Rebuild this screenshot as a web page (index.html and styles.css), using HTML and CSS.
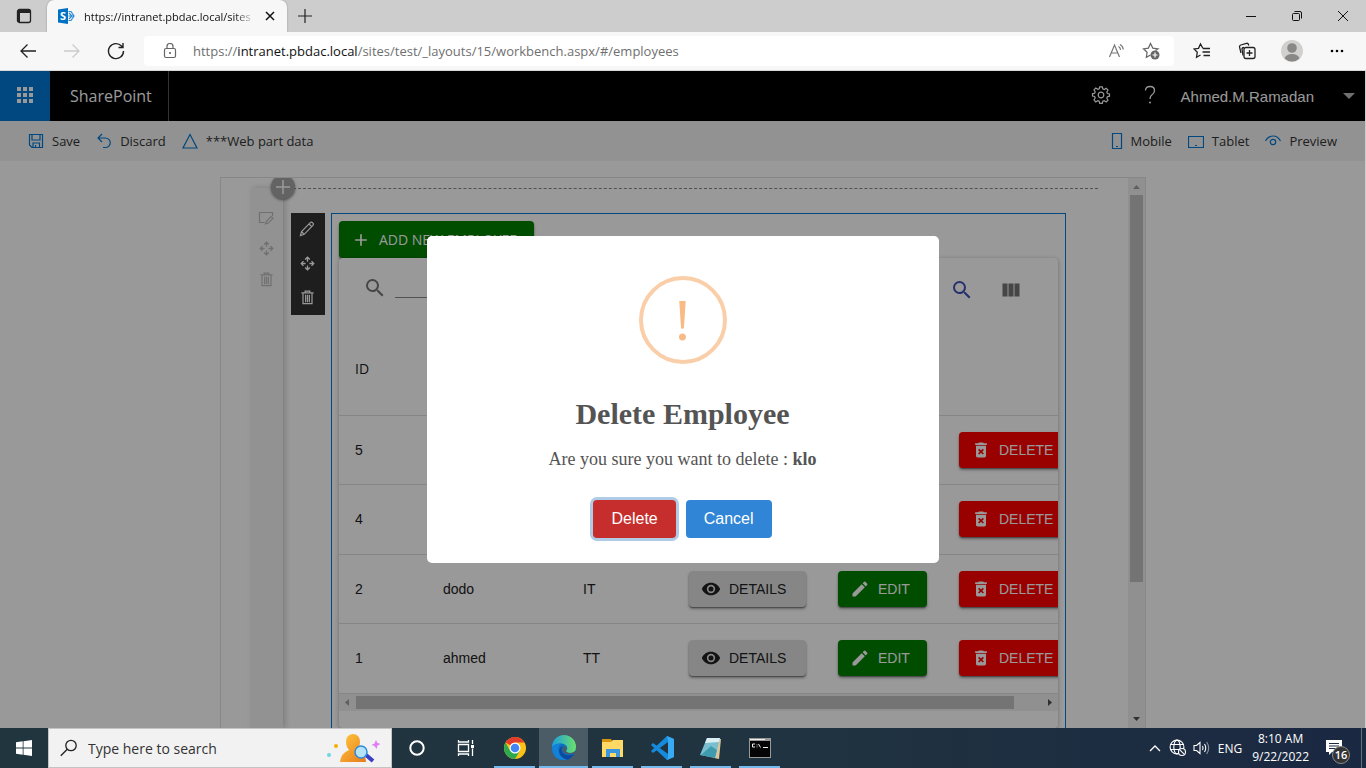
FILE: index.html
```html
<!DOCTYPE html>
<html lang="en">
<head>
<meta charset="utf-8">
<title>SharePoint Workbench</title>
<link rel="stylesheet" href="styles.css">
</head>
<body>
<svg class="sprite" aria-hidden="true">
  <symbol id="i-search" viewBox="0 0 24 24"><path fill="currentColor" d="M15.5 14h-.79l-.28-.27A6.47 6.47 0 0 0 16 9.5 6.5 6.5 0 1 0 9.5 16c1.61 0 3.09-.59 4.23-1.57l.27.28v.79l5 4.99L20.49 19zm-6 0a4.5 4.5 0 1 1 0-9 4.5 4.5 0 0 1 0 9"/></symbol>
  <symbol id="i-eye" viewBox="0 0 24 24"><path fill="currentColor" d="M12 4.5C7 4.500 2.730 7.610 1 12c1.730 4.390 6 7.500 11 7.500s9.270-3.110 11-7.500c-1.730-4.390-6-7.500-11-7.500M12 17a5 5 0 1 1 0-10 5 5 0 0 1 0 10m0-8a3 3 0 1 0 0 6 3 3 0 0 0 0-6"/></symbol>
  <symbol id="i-pen" viewBox="0 0 24 24"><path fill="currentColor" d="M3 17.250V21h3.750L17.810 9.940l-3.750-3.750zM20.710 7.040a1 1 0 0 0 0-1.410l-2.340-2.340a1 1 0 0 0-1.410 0l-1.830 1.830 3.750 3.750z"/></symbol>
  <symbol id="i-bin" viewBox="0 0 24 24"><path fill="currentColor" d="M6 19c0 1.100.9 2 2 2h8c1.100 0 2-.9 2-2V7H6zm2.460-7.120 1.410-1.410L12 12.590l2.120-2.120 1.410 1.410L13.410 14l2.120 2.120-1.410 1.410L12 15.410l-2.120 2.120-1.410-1.410L10.590 14zM15.500 4l-1-1h-5l-1 1H5v2h14V4z"/></symbol>
  <symbol id="i-move" viewBox="0 0 16 16"><g fill="none" stroke="currentColor" stroke-width="1.400"><path d="M5.500 3.700 8 1.300l2.500 2.400M5.500 12.300 8 14.700l2.500-2.400M3.700 5.500 1.300 8l2.400 2.500M12.300 5.500 14.700 8l-2.400 2.500M8 2v4M8 10v4M2 8h4M10 8h4"/></g></symbol>
  <symbol id="i-trash" viewBox="0 0 16 16"><g fill="none" stroke="currentColor" stroke-width="1.300"><path d="M1.500 3h13M5.500 3V1.200h5V3M3.200 3v11.500h9.600V3M6 5v8M8 5v8M10 5v8"/></g></symbol>
</svg>

<header class="tabstrip">
  <button class="tab-menu" aria-label="Tab actions"><svg width="16" height="16" viewBox="0 0 16 16"><rect x="1.500" y="1.500" width="13" height="13" rx="2" fill="none" stroke="#222" stroke-width="1.300"/><path d="M2 2h12v3H2zM1.500 4h2.500v10h-2.500z" fill="#222"/></svg></button>
  <div class="tab">
    <svg width="17" height="16" viewBox="0 0 17 16"><path d="M0 1.500 10 0v16L0 14.500z" fill="#0072c6"/><text x="2" y="12" class="logo-s">S</text><path d="M10.500 3.500h2.500l3 4.500-3 4.500h-2.500M10.500 8H16M11 5l3 3-3 3" fill="none" stroke="#2a8ad4" stroke-width="1.200"/></svg>
    <span class="tab-title">https://intranet.pbdac.local/sites</span>
    <button class="tab-close" aria-label="Close tab"><svg width="10" height="10" viewBox="0 0 10 10"><path d="m1 1 8 8M9 1 1 9" stroke="#111" stroke-width="1.500"/></svg></button>
  </div>
  <button class="new-tab" aria-label="New tab"><svg width="16" height="16" viewBox="0 0 16 16"><path d="M8 1v14M1 8h14" stroke="#222" stroke-width="1.200"/></svg></button>
  <div class="window-controls">
    <button aria-label="Minimize"><svg width="12" height="12" viewBox="0 0 12 12"><path d="M1 6.500h10" stroke="#111"/></svg></button>
    <button aria-label="Restore"><svg width="12" height="12" viewBox="0 0 12 12" fill="none" stroke="#111"><rect x="1.500" y="3.500" width="7" height="7" rx="1"/><path d="M3.500 1.500H9Q10.500 1.500 10.500 3v5.500"/></svg></button>
    <button aria-label="Close"><svg width="12" height="12" viewBox="0 0 12 12"><path d="m1 1 10 10M11 1 1 11" stroke="#111"/></svg></button>
  </div>
</header>

<nav class="browser-bar">
  <div class="nav-buttons">
    <button aria-label="Back"><svg width="18" height="16" viewBox="0 0 18 16"><path d="M17 8H2M8.500 1.500 2 8l6.500 6.500" fill="none" stroke="#222" stroke-width="1.300"/></svg></button>
    <button aria-label="Forward"><svg width="18" height="16" viewBox="0 0 18 16"><path d="M1 8h15M9.500 1.500 16 8l-6.500 6.500" fill="none" stroke="#ccc" stroke-width="1.300"/></svg></button>
    <button aria-label="Refresh"><svg width="18" height="18" viewBox="0 0 18 18"><path d="M16.500 9A7.500 7.500 0 1 1 14.500 4L16 5.500M16 1v4.500h-4.500" fill="none" stroke="#222" stroke-width="1.400"/></svg></button>
  </div>
  <div class="address">
    <svg width="14" height="16" viewBox="0 0 14 16"><rect x="1.500" y="5.500" width="11" height="9" rx="1.500" fill="none" stroke="#666" stroke-width="1.200"/><path d="M4 5.500V3.500a3 3 0 0 1 6 0v2" fill="none" stroke="#666" stroke-width="1.200"/><circle cx="7" cy="10" r="1" fill="#555"/></svg>
    <span class="url"><span>https://</span><b>intranet.pbdac.local</b><span>/sites/test/_layouts/15/workbench.aspx/#/employees</span></span>
    <button aria-label="Read aloud"><svg width="18" height="16" viewBox="0 0 18 16" fill="none" stroke="#777" stroke-width="1.200"><path d="M1.500 14 6.500 2l5 12M3.300 10h6.500M10.500 3.500q2 1 2 3.500M12 1.500q3 1.500 3.200 5"/></svg></button>
    <button aria-label="Add to favorites"><svg width="18" height="18" viewBox="0 0 18 18"><path d="M13.500 8.500 16 6.800l-5.200-.7-2.300-4.600-2.100 4.600-4.900.7 3.600 3.500-.8 5L8.500 13" fill="none" stroke="#666" stroke-width="1.200"/><circle cx="13" cy="13" r="4.500" fill="#666"/><path d="M13 10.500v5M10.500 13h5" stroke="#fff" stroke-width="1.200"/></svg></button>
  </div>
  <div class="bar-actions">
    <button aria-label="Favorites"><svg width="18" height="18" viewBox="0 0 18 18" fill="none" stroke="#222" stroke-width="1.300"><path d="M10 6.500 7.500 2 5.500 6.300l-4.500.6 3.300 3.400-.8 4.900L7.500 13M10 6.500h7M9.500 10h7.500M10.500 13.500H17"/></svg></button>
    <button aria-label="Collections"><svg width="18" height="18" viewBox="0 0 18 18" fill="none" stroke="#222" stroke-width="1.300"><path d="M3 11 1.500 5Q1.300 3.500 2.800 3L8.500 1.300q1.500-.3 2 1.200l.3 1"/><path d="M5 13.500 4 7Q4 5.500 6 5.500"/><rect x="6" y="5.500" width="11" height="11" rx="2" fill="#f7f7f7"/><path d="M11.500 8v6M8.500 11h6"/></svg></button>
    <button aria-label="Profile"><svg width="22" height="22" viewBox="0 0 22 22"><circle cx="11" cy="11" r="11" fill="#d2d0ce"/><circle cx="11" cy="8" r="4.800" fill="#8a8886"/><path d="M3.500 18.500Q5 14 11 14t7.500 4.500A11 11 0 0 1 3.500 18.500" fill="#8a8886"/></svg></button>
    <button aria-label="Settings and more"><svg width="14" height="4" viewBox="0 0 14 4"><circle cx="2" cy="2" r="1.300"/><circle cx="7" cy="2" r="1.300"/><circle cx="12" cy="2" r="1.300"/></svg></button>
  </div>
</nav>

<main class="page">
  <header class="suite">
    <button class="launcher" aria-label="App launcher"><svg width="16" height="16" viewBox="0 0 16 16" fill="#fff"><path d="M0 0h4v4H0zM6 0h4v4H6zM12 0h4v4h-4zM0 6h4v4H0zM6 6h4v4H6zM12 6h4v4h-4zM0 12h4v4H0zM6 12h4v4H6zM12 12h4v4h-4z"/></svg></button>
    <a class="brand" href="#">SharePoint</a>
    <div class="suite-tools">
      <button aria-label="Settings"><svg width="20" height="20" viewBox="-10 -10 20 20" fill="none" stroke="#fff" stroke-width="1.200"><circle r="2.800"/><path d="M-1.300-8.200h2.600l.5 2.100 1.500.6 1.900-1.200 1.800 1.800-1.200 1.900.6 1.500 2.100.5v2.200l-2.100.5-.6 1.500 1.200 1.900-1.800 1.800-1.900-1.200-1.500.6-.5 2.100h-2.600l-.5-2.100-1.500-.6-1.900 1.200L-7 4.900l1.200-1.900-.6-1.500-2.100-.5v-2.200l2.100-.5.6-1.500L-7-5.100l1.800-1.800 1.900 1.200 1.500-.6z"/></svg></button>
      <button aria-label="Help"><svg width="12" height="20" viewBox="0 0 12 20"><path d="M1.500 5.500Q1.500 1.500 6 1.500t4.500 4Q10.500 8 8 9.800 6 11.200 6 14" fill="none" stroke="#fff" stroke-width="1.300"/><circle cx="6" cy="17.500" r="1" fill="#fff"/></svg></button>
      <button class="user">Ahmed.M.Ramadan <svg width="12" height="6" viewBox="0 0 12 6"><path d="M0 0h12L6 6z" fill="#bbb"/></svg></button>
    </div>
  </header>

  <div class="commands">
    <div class="group">
      <button><svg width="16" height="16" viewBox="0 0 16 16"><path d="M1.500 1.500h13v13H4L1.500 12zM4 1.500V7h8V1.500M5 14v-4h6.500v4M7.500 14v-2" /></svg>Save</button>
      <button><svg width="16" height="16" viewBox="0 0 16 16"><path d="M6 1 2 5l4 4M2 5h7.500a4.700 4.700 0 0 1 0 9.500H7"/></svg>Discard</button>
      <button><svg width="16" height="16" viewBox="0 0 16 16"><path d="M8 1.500 15 15H1z"/></svg>***Web part data</button>
    </div>
    <div class="group">
      <button><svg width="12" height="18" viewBox="0 0 12 18"><path d="M1.500 1.500h9v15h-9zM5 14.500h2"/></svg>Mobile</button>
      <button><svg width="16" height="16" viewBox="0 0 16 16"><path d="M.500 3.500h15v11H.5zM7 12.500h2"/></svg>Tablet</button>
      <button><svg width="16" height="16" viewBox="0 0 16 16"><path d="M.500 8Q3 3 8 3t7.500 5"/><circle cx="8" cy="9" r="2.700"/></svg>Preview</button>
    </div>
  </div>

  <div class="workspace">
    <div class="canvas">
      <div class="section-bar">
        <button class="add-section" aria-label="Add section"><svg width="16" height="16" viewBox="0 0 16 16"><path d="M8 1v14M1 8h14" stroke="#fff" stroke-width="1.500"/></svg></button>
        <button aria-label="Edit section"><svg width="16" height="16" viewBox="0 0 16 16" fill="none" stroke="currentColor" stroke-width="1.200"><path d="M6.500 12.500h-5v-10h13V6M7.500 14l.7-2.500 5-5 1.800 1.800-5 5z"/></svg></button>
        <button aria-label="Move section"><svg width="15" height="15"><use href="#i-move"/></svg></button>
        <button aria-label="Delete section"><svg width="15" height="15"><use href="#i-trash"/></svg></button>
      </div>
      <div class="section">
        <div class="zone">
          <div class="part-tools">
            <button aria-label="Edit web part"><svg width="16" height="16" viewBox="0 0 16 16" fill="none" stroke="currentColor" stroke-width="1.200"><path d="m1.500 14.500 1-4L11.300 1.700q1.200-1 2.400.2t.2 2.400L5.200 13.300zM2.500 10.500l2.700 2.800M10 3l2.700 2.700"/></svg></button>
            <button aria-label="Move web part"><svg width="15" height="15"><use href="#i-move"/></svg></button>
            <button aria-label="Delete web part"><svg width="15" height="15"><use href="#i-trash"/></svg></button>
          </div>
          <div class="webpart">
            <button class="btn green add"><svg width="20" height="20" viewBox="0 0 24 24"><path d="M19 13h-6v6h-2v-6H5v-2h6V5h2v6h6z" fill="currentColor"/></svg>ADD NEW EMPLOYEE</button>
            <div class="paper">
              <div class="table-tools">
                <label for="q" class="gray"><svg width="24" height="24"><use href="#i-search"/></svg></label>
                <input id="q" type="text" aria-label="Search">
                <button class="indigo" aria-label="Toggle search"><svg width="24" height="24"><use href="#i-search"/></svg></button>
                <button class="gray" aria-label="View columns"><svg width="24" height="24" viewBox="0 0 24 24"><path d="M3.500 5.500h5v13h-5zM9.500 5.500h5v13h-5zM15.500 5.500h5v13h-5z" fill="currentColor"/></svg></button>
              </div>
              <div class="table-clip">
                <table>
                  <colgroup><col class="c-id"><col class="c-name"><col class="c-dept"><col class="c-details"><col class="c-edit"><col class="c-delete"></colgroup>
                  <thead><tr><th>ID</th><th></th><th></th><th></th><th></th><th></th></tr></thead>
                  <tbody>
                    <tr><td>5</td><td></td><td></td><td></td><td></td><td><button class="btn red"><svg width="20" height="20"><use href="#i-bin"/></svg>DELETE</button></td></tr>
                    <tr><td>4</td><td></td><td></td><td></td><td></td><td><button class="btn red"><svg width="20" height="20"><use href="#i-bin"/></svg>DELETE</button></td></tr>
                    <tr><td>2</td><td>dodo</td><td>IT</td><td><button class="btn plain"><svg width="20" height="20"><use href="#i-eye"/></svg>DETAILS</button></td><td><button class="btn green"><svg width="20" height="20"><use href="#i-pen"/></svg>EDIT</button></td><td><button class="btn red"><svg width="20" height="20"><use href="#i-bin"/></svg>DELETE</button></td></tr>
                    <tr><td>1</td><td>ahmed</td><td>TT</td><td><button class="btn plain"><svg width="20" height="20"><use href="#i-eye"/></svg>DETAILS</button></td><td><button class="btn green"><svg width="20" height="20"><use href="#i-pen"/></svg>EDIT</button></td><td><button class="btn red"><svg width="20" height="20"><use href="#i-bin"/></svg>DELETE</button></td></tr>
                  </tbody>
                </table>
              </div>
              <div class="hscroll"><svg width="17" height="17" viewBox="0 0 17 17"><path d="M10 5v7L6 8.500z" fill="#a0a0a0"/></svg><div class="track"><div class="thumb"></div></div><svg width="17" height="17" viewBox="0 0 17 17"><path d="M7 5v7l4-3.500z" fill="#505050"/></svg></div>
            </div>
          </div>
        </div>
      </div>
      <div class="vscroll"><svg width="17" height="17" viewBox="0 0 17 17"><path d="M5 11h7L8.500 7z" fill="#a0a0a0"/></svg><div class="track"><div class="thumb"></div></div><svg width="17" height="17" viewBox="0 0 17 17"><path d="M5 6h7l-3.500 4z" fill="#505050"/></svg></div>
    </div>
  </div>

  <div class="backdrop">
    <section class="dialog" role="dialog" aria-labelledby="dlg-title">
      <div class="warn">!</div>
      <h2 id="dlg-title">Delete Employee</h2>
      <p>Are you sure you want to delete : <b>klo</b></p>
      <div class="dialog-actions"><button class="confirm">Delete</button><button class="cancel">Cancel</button></div>
    </section>
  </div>
</main>

<footer class="taskbar">
  <button class="start" aria-label="Start"><svg width="16" height="16" viewBox="0 0 16 16" fill="#fff"><path d="M0 2.200 6.700 1.300v6.300H0zM7.500 1.200 16 0v7.600H7.500zM0 8.400h6.700v6.300L0 13.800zM7.500 8.400H16V16l-8.500-1.200z"/></svg></button>
  <div class="search-box">
    <svg width="18" height="18" viewBox="0 0 18 18" fill="none" stroke="#222" stroke-width="1.300"><circle cx="11" cy="6.500" r="5.200"/><path d="m7.300 10.200-6.500 6.500"/></svg>
    <input type="text" aria-label="Search" placeholder="Type here to search">
    <svg width="54" height="32" viewBox="0 0 54 32"><defs><linearGradient id="person" x2="1" y2="1"><stop stop-color="#ffc83d"/><stop offset="1" stop-color="#e87a1c"/></linearGradient></defs><path d="M14 30q1-9 9-12-3-3-3-9a7 7 0 0 1 14 0q0 6-3 9 9 3 9 12z" fill="url(#person)"/><path d="m40 23 7 6" stroke="#3b3fc4" stroke-width="4"/><circle cx="35" cy="20" r="6" fill="#b5e4f7" stroke="#2f8ad8" stroke-width="1.500"/><circle cx="10" cy="14" r="2" fill="#f7b000"/><circle cx="3" cy="23" r="2" fill="#6cd6e4"/><path d="m50 8 1.500 3 3 1-3 1.500-1 3.500-2-3-3-1 3-1.500z" fill="#e07cf5"/></svg>
  </div>
  <div class="apps">
    <button aria-label="Cortana"><svg width="16" height="16" viewBox="0 0 16 16"><circle cx="8" cy="8" r="6.700" fill="none" stroke="#fff" stroke-width="2"/></svg></button>
    <button aria-label="Task View"><svg width="18" height="18" viewBox="0 0 18 18" fill="none" stroke="#fff" stroke-width="1.300"><path d="M1.500 5.500h10v7h-10zM1.500 1v2h10V1M1.500 17v-2h10v2M15.500 1v4M15.500 9.500V17"/><path d="M14 6h3v3h-3z" fill="#fff" stroke="none"/></svg></button>
    <button class="open" aria-label="Chrome"><svg width="24" height="24" viewBox="0 0 24 24"><circle cx="12" cy="12" r="11" fill="#fbc116"/><path d="M12 12 2.500 6.500A11 11 0 0 1 21.500 6.500H12z" fill="#e33b2e"/><path d="M2.500 6.500A11 11 0 0 0 12 23l5-8.500-5 2-5-2z" fill="#2da94f"/><circle cx="12" cy="12" r="5.500" fill="#fff"/><circle cx="12" cy="12" r="4.300" fill="#4285f4"/></svg></button>
    <button class="open active" aria-label="Edge"><svg width="26" height="26" viewBox="0 0 26 26"><defs><linearGradient id="edge" x2="1"><stop stop-color="#1c9de0"/><stop offset="1" stop-color="#6be06a"/></linearGradient></defs><circle cx="13" cy="13" r="12" fill="#0c6fc4"/><path d="M1 12A12 12 0 0 1 25 12q0 6-6 6-4 0-4-2 2-2 1-4-1.500-3.500-6-3.500Q4 8.500 1 12" fill="url(#edge)"/><path d="M1 12q3-4 9-3.500Q6 12 8 17q2.500 6 8.500 7.500Q5 27 1.500 17z" fill="#1281d7"/><path d="M12 11q-3 4 0 7 4 4 11 1-3 5-7 5.800Q8 22 8 16q0-4 4-5" fill="#0b4a9e"/><path d="M16 13q-2 2-1 3.500 2 2 6 1.200L25 16l1 4-2 1-2-2.500q-6 2-9-1t0-6q2-.8 3 1.500" fill="#4b5a64"/></svg></button>
    <button class="open" aria-label="File Explorer"><svg width="24" height="24" viewBox="0 0 24 24"><path d="M1 3h9l2 3h-11z" fill="#d9950f"/><path d="M1 6h9l2-2h10v17H1z" fill="#ffd866"/><path d="M5 21v-8h14v8h-4v-4H9v4z" fill="#3a96dd"/></svg></button>
    <button class="open" aria-label="Visual Studio Code"><svg width="24" height="24" viewBox="0 0 24 24"><path d="m17 0 7 3v18l-7 3L1 9l2-2 15 11V6L3 17l-2-2z" fill="#168bdc"/><path d="m17 0 7 3v18l-7 3 1-3V4z" fill="#38a9f3"/></svg></button>
    <button class="open" aria-label="Notepad"><svg width="24" height="24" viewBox="0 0 24 24"><path d="M9 2 22 3l-2 20-5-1z" fill="#d8c79a"/><path d="M8 2h13l-5 20-15-3z" fill="#79bfd0"/><path d="M8 2h13l-1 4L6 7z" fill="#d9eff3"/><path d="m12 10-10 9 14 3 2-8z" fill="#3f9caf"/></svg></button>
    <button class="open" aria-label="Command Prompt"><svg width="22" height="20" viewBox="0 0 22 20"><path d="M0 0h22v20H0z" fill="#999"/><path d="M1 3h20v16H1z" fill="#050505"/><path d="M1 1h15v1H1z" fill="#eee"/><path d="M6 6H3.500v3H6M8 6.500v.8M8 8.500v.8M9.500 6l2 3.500M14 9.500h5" fill="none" stroke="#eee"/></svg></button>
  </div>
  <div class="tray">
    <button aria-label="Show hidden icons"><svg width="12" height="8" viewBox="0 0 12 8"><path d="m1 7 5-5 5 5" fill="none" stroke="#fff" stroke-width="1.300"/></svg></button>
    <svg width="18" height="18" viewBox="0 0 18 18" fill="none" stroke="#fff" stroke-width="1.100"><circle cx="8" cy="8" r="6.900"/><ellipse cx="8" cy="8" rx="3.200" ry="6.900"/><path d="M1 5.500h14M1 10.500h9"/><circle cx="13" cy="13" r="3.500" fill="#1c2b40"/><path d="m10.800 10.800 4.400 4.400"/></svg>
    <svg width="18" height="16" viewBox="0 0 18 16" fill="none" stroke="#fff" stroke-width="1.100"><path d="M1 5.500h2.500L7 2.500v11L3.500 10.500H1zM9.500 6q1.200 2 0 4M11.500 4q2.500 4 0 8"/><path d="M13.700 2q4 6 0 12" stroke="#8995a5"/></svg>
    <span class="lang">ENG</span>
    <time><span>8:10 AM</span><span>9/22/2022</span></time>
    <button class="notice" aria-label="16 notifications"><svg width="18" height="18" viewBox="0 0 18 18"><path d="M1 1h16v12H7l-3 3v-3H1z" fill="#fff"/><path d="M4 4.500h10M4 7h10M4 9.500h7" stroke="#1c2a44" stroke-width="1.200"/></svg><span class="badge">16</span></button>
  </div>
</footer>
</body>
</html>
```
FILE: styles.css
```css
* { box-sizing: border-box; }
body {
  margin: 0;
  height: 100vh;
  display: flex;
  flex-direction: column;
  overflow: hidden;
  background: #ccc;
  font-family: "Open Sans", "Noto Sans", sans-serif;
  font-size: 13px;
  color: #333;
}
button, input { font: inherit; color: inherit; border: 0; padding: 0; background: none; }
button { display: flex; align-items: center; justify-content: center; }
svg { display: block; flex: none; }
.sprite { position: absolute; width: 0; height: 0; }

.tabstrip { display: flex; height: 32px; flex: none; background: #cdcdcd; }
.tab-menu { width: 47px; }
.tab {
  display: flex;
  align-items: center;
  gap: 9px;
  width: 240px;
  padding: 0 11px;
  background: #f7f7f7;
  border-radius: 7px 7px 0 0;
  box-shadow: 0 0 2px rgba(0, 0, 0, .3);
}
.tab-title {
  flex: 1;
  white-space: nowrap;
  font-size: 11px;
  color: #111;
  -webkit-mask-image: linear-gradient(90deg, #000 88%, transparent);
  mask-image: linear-gradient(90deg, #000 88%, transparent);
}
.tab-close { width: 12px; height: 16px; }
.logo-s { font: bold 11px "Open Sans", sans-serif; fill: #fff; }
.new-tab { width: 36px; }
.window-controls { display: flex; margin-left: auto; }
.window-controls button { width: 46px; }

.browser-bar { display: flex; align-items: center; height: 39px; flex: none; background: #f7f7f7; border-bottom: 1px solid #d8d8d8; }
.nav-buttons { display: flex; width: 144px; padding-left: 6px; }
.nav-buttons button { width: 44px; height: 32px; }
.address { display: flex; flex: 1; align-items: center; gap: 16px; height: 30px; padding: 0 14px 0 19px; background: #fff; border-radius: 4px; }
.url { flex: 1; color: #6f6f6f; white-space: nowrap; }
.url b { font-weight: 400; color: #111; }
.bar-actions { display: flex; width: 192px; padding: 0 7px 0 5px; }
.bar-actions button { width: 45px; height: 32px; }

.page { position: relative; display: flex; flex: 1; flex-direction: column; min-height: 0; margin-right: 1px; overflow: hidden; background: #fff; }
.suite { display: flex; flex: none; height: 50px; background: #000; color: #fff; }
.launcher { width: 50px; background: #0078d4; }
.launcher svg { margin-bottom: 2px; }
.brand { display: flex; align-items: center; padding: 0 16px 0 20px; border-right: 1px solid #555; color: #fff; font-size: 16px; text-decoration: none; }
.suite-tools { display: flex; align-items: center; gap: 25px; margin-left: auto; padding-right: 10px; }
.suite-tools button { height: 50px; }
.suite-tools button:not(.user) { padding-bottom: 3px; min-width: 24px; }
.suite-tools .user { gap: 29px; margin-left: -6px; font: 15px "Liberation Sans", Arial, sans-serif; }

.commands { display: flex; justify-content: space-between; flex: none; height: 40px; padding: 0 28px; background: #f4f4f4; }
.group { display: flex; gap: 16px; }
.group button { gap: 8px; }
.group svg { fill: none; stroke: #0078d4; stroke-width: 1.200; }

.workspace { display: flex; flex: 1; min-height: 0; padding: 16px 219px 0 220px; }
.canvas { display: flex; flex: 1; min-width: 0; overflow: hidden; padding-left: 30px; border: 1px solid #e1e1e1; border-bottom: 0; }
.section-bar { position: relative; width: 32px; margin-top: 10px; padding-top: 14px; background: #f3f3f3; color: #bbb; box-shadow: 2px 0 6px rgba(0, 0, 0, .2); }
.section-bar button { width: 30px; height: 31px; }
.section-bar .add-section { position: absolute; top: -13px; right: -12px; width: 24px; height: 24px; border-radius: 50%; background: #a6a6a6; box-shadow: 0 1px 3px rgba(0, 0, 0, .5); }
.section { display: flex; flex: 1; min-width: 0; margin: 10px 30px 0 0; border-top: 1px dashed #888; }
.zone { display: flex; flex: 1; min-width: 0; gap: 6px; padding: 24px 32px 0 8px; }
.part-tools { align-self: flex-start; width: 34px; background: #333; color: #fff; }
.part-tools button { width: 34px; height: 34px; padding: 0 2px 2px 0; }
.webpart { display: flex; flex: 1; flex-direction: column; min-width: 0; padding: 7px 7px 0; border: 1px solid #0078d4; border-bottom: 0; font: 14px "Liberation Sans", Arial, sans-serif; color: #212121; }

.btn { gap: 8px; height: 36px; padding: 0 16px 0 12px; border-radius: 4px; white-space: nowrap; box-shadow: 0 2px 3px rgba(0, 0, 0, .35), 0 1px 1px rgba(0, 0, 0, .3); }
td .btn { padding-left: 12px; justify-content: flex-start; }
.green { background: #008000; color: #fff; }
.red { background: #f00; color: #fff; }
.plain { background: #e0e0e0; color: #212121; }
.add { align-self: flex-start; flex: none; justify-content: flex-start; min-width: 195px; height: 37px; font: 14px "Open Sans", sans-serif; }
.paper { flex: 1; overflow: hidden; background: #fff; border-radius: 4px; box-shadow: 0 1px 4px rgba(0, 0, 0, .3); }
.table-tools { display: flex; align-items: center; height: 64px; padding: 0 35px 0 24px; }
.table-tools label { padding-bottom: 4px; }
.table-tools input { width: 190px; height: 28px; margin: 0 auto 12px 8px; border-bottom: 1px solid #888; outline: 0; }
.table-tools button + button { margin-left: 25px; }
.gray { color: #757575; }
.indigo { color: #3f51b5; }

.table-clip { overflow: hidden; }
table { width: 100%; min-width: 749px; table-layout: fixed; border-collapse: collapse; }
.c-id { width: 88px; }
.c-name { width: 140px; }
.c-dept { width: 106px; }
.c-details { width: 149px; }
.c-edit { width: 121px; }
.c-delete { width: auto; }
th, td { height: 69px; padding: 0 16px; border-bottom: 1px solid #e0e0e0; text-align: left; font-weight: 400; }
th { height: 93px; font: 14px "Open Sans", sans-serif; }
tbody tr:nth-child(even) td { height: 70px; }
.plain { min-width: 117px; }
td .green { min-width: 89px; }
td .red { min-width: 113px; }

.hscroll { display: flex; height: 17px; background: #f1f1f1; }
.track { flex: 1; min-height: 0; }
.thumb { background: #c1c1c1; }
.hscroll .thumb { width: 96%; height: 13px; margin-top: 2px; }
.vscroll { display: flex; flex-direction: column; width: 17px; background: #f1f1f1; }
.vscroll .thumb { width: 13px; height: 75%; margin-left: 2px; }

.backdrop { position: absolute; inset: 0; display: flex; align-items: center; justify-content: center; background: rgba(0, 0, 0, .4); }
.dialog {
  display: flex;
  flex-direction: column;
  align-items: center;
  width: 512px;
  padding: 40px 20px 25px;
  border-radius: 5px;
  background: #fff;
  color: #545454;
  font: 18px "Liberation Serif", "Times New Roman", serif;
}
.warn { display: flex; align-items: center; justify-content: center; width: 88px; height: 88px; border: 4px solid #facea8; border-radius: 50%; color: #f8bb86; font-size: 60px; line-height: 80px; }
.dialog h2 { margin: 32px 0 0; font-size: 30px; line-height: 36px; }
.dialog p { margin: 15px 0 0; line-height: 24px; }
.dialog-actions { display: flex; gap: 10px; margin-top: 29px; }
.dialog-actions button { height: 38px; padding: 0 18px; border-radius: 4px; color: #fff; font: 16px "Liberation Sans", Arial, sans-serif; }
.confirm { background: #c62e2e; box-shadow: 0 0 0 3px #b0cbe6; }
.cancel { background: #3085d6; }

.taskbar { display: flex; flex: none; height: 40px; background: linear-gradient(90deg, #21353f, #203340 60%, #1a2842); color: #fff; }
.start { width: 48px; }
.search-box { display: flex; align-items: center; gap: 10px; width: 344px; padding: 0 11px; background: #f2f2f2; border: 1px solid #c4c4c4; color: #333; }
.search-box input { flex: 1; min-width: 0; font-size: 14px; }
.search-box input::placeholder { color: #333; opacity: 1; }
.apps { display: flex; }
.apps button { position: relative; width: 49px; }
.apps .active { background: #4c5c66; }
.apps .open::after { content: ""; position: absolute; left: 4px; right: 4px; bottom: 0; height: 2px; background: #76b9ed; }
.apps .active::after { left: 0; right: 0; }
.tray { display: flex; align-items: center; gap: 6px; margin-left: auto; margin-right: 4px; padding-right: 10px; border-right: 1px solid #66707f; font-size: 12px; }
.tray button:first-child { width: 16px; height: 40px; }
.lang { margin-left: 1px; }
.tray time { display: flex; flex-direction: column; align-items: center; margin: 0 10px 0 4px; line-height: 18px; }
.notice { position: relative; width: 26px; height: 40px; justify-content: flex-start; }
.badge { position: absolute; left: 7px; top: 18px; width: 18px; height: 18px; border: 1px solid #8a8a8a; border-radius: 50%; background: #333; font-size: 11px; font-weight: 600; line-height: 16px; text-align: center; }
```
